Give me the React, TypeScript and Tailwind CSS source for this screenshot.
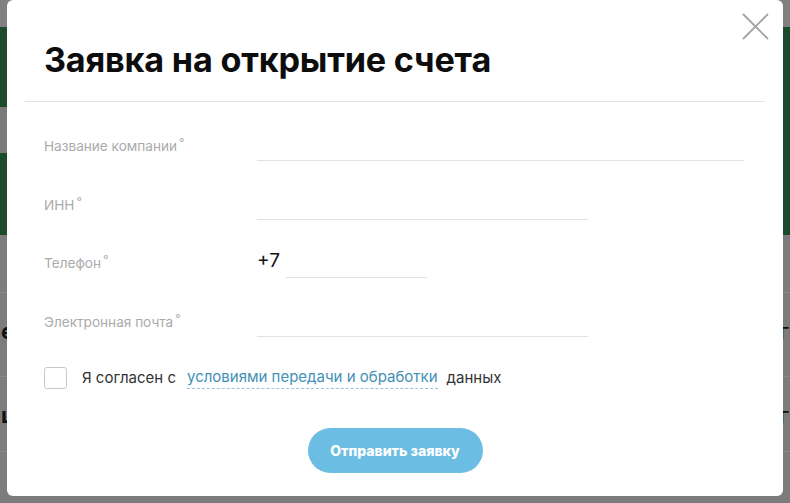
const fields = [
  { label: 'Название компании', width: 'w-[487px]' },
  { label: 'ИНН', width: 'w-[331px]' },
  { label: 'Телефон', width: 'w-[141px]', phone: true },
  { label: 'Электронная почта', width: 'w-[331px]' },
];

function Field({ label, width, phone }: { label: string; width: string; phone?: boolean }) {
  return (
    <div className="flex h-[44px] items-end">
      <div className="w-[213px] shrink-0 pb-[5px] text-[13.6px] leading-[18px] text-[#ababab]">
        {label}
        <span className="relative -top-[4px] ml-[2px] text-[12px] font-semibold text-[#b8b8b8]">°</span>
      </div>
      {phone ? (
        <div className="flex items-end">
          <span className="pb-[5px] text-[19px] leading-[24px] text-[#111]">+7</span>
          <div className={`ml-[6px] h-[36px] border-b border-[#e2e2e2] ${width}`} />
        </div>
      ) : (
        <div className={`h-[36px] border-b border-[#e2e2e2] ${width}`} />
      )}
    </div>
  );
}

export default function App() {
  return (
    <div className="relative h-[503px] w-[790px] overflow-hidden bg-[#7c7c7c] font-['Inter',sans-serif]">
      {/* dimmed page behind the overlay */}
      <div className="flex flex-col">
        <div className="h-[27px] bg-[#808080]" />
        <div className="h-[80px] bg-[#1b4a2d]" />
        <div className="h-[46px] bg-[#1b4a2d]">
          <div className="h-full w-[12px] bg-[#7a7a7a]" />
        </div>
        <div className="h-[82px] bg-[#1b4a2d]" />
        <div className="h-[57px]" />
        <div className="border-t border-[#8a8a8a] pt-[26px]">
          <div className="flex justify-between px-[1px] text-[22px] font-bold leading-[24px] text-[#111]">
            <span>е</span>
            <span className="font-normal">г</span>
          </div>
        </div>
        <div className="mt-[33px] border-t border-[#8a8a8a] pt-[26px]">
          <div className="flex justify-between px-[1px] text-[22px] font-bold leading-[24px] text-[#111]">
            <span>ц</span>
            <span className="font-normal">г</span>
          </div>
        </div>
        <div className="mt-[24px] border-t border-[#8a8a8a]" />
      </div>

      {/* modal */}
      <div className="absolute left-[7px] top-0 h-[496px] w-[776px] rounded-[6px] bg-white">
        <button className="absolute right-[14px] top-[13px]">
          <svg width="27" height="27" viewBox="0 0 27 27" fill="none" stroke="#a3a3a3" strokeWidth="1.8">
            <path d="M1 1 L26 26 M26 1 L1 26" />
          </svg>
        </button>

        <h2 className="pl-[37px] pt-[38px] text-[34.2px] font-bold leading-[44px] tracking-[-0.2px] text-[#0d0d0d]">
          Заявка на открытие счета
        </h2>
        <div className="mx-[18px] mt-[19px] border-t border-[#e3e3e3]" />

        <div className="flex flex-col gap-[14.7px] px-[37px] pt-[15px]">
          {fields.map((f) => (
            <Field key={f.label} label={f.label} width={f.width} phone={f.phone} />
          ))}
        </div>

        <div className="mt-[29px] flex items-center pl-[37px] text-[15px] leading-[22px] text-[#333]">
          <div className="h-[22px] w-[23px] rounded-[3px] border border-[#c8c8c8]" />
          <span className="ml-[15px]">Я согласен с</span>
          <a className="ml-[11px] border-b border-dashed border-[#9cc4d8] text-[#4290b6]">
            условиями передачи и обработки
          </a>
          <span className="ml-[9px]">данных</span>
        </div>

        <div className="mt-[39px] flex justify-center">
          <button className="h-[45px] w-[175px] rounded-full bg-[#6cbde3] text-[14px] font-extrabold text-white">
            Отправить заявку
          </button>
        </div>
      </div>
    </div>
  );
}
